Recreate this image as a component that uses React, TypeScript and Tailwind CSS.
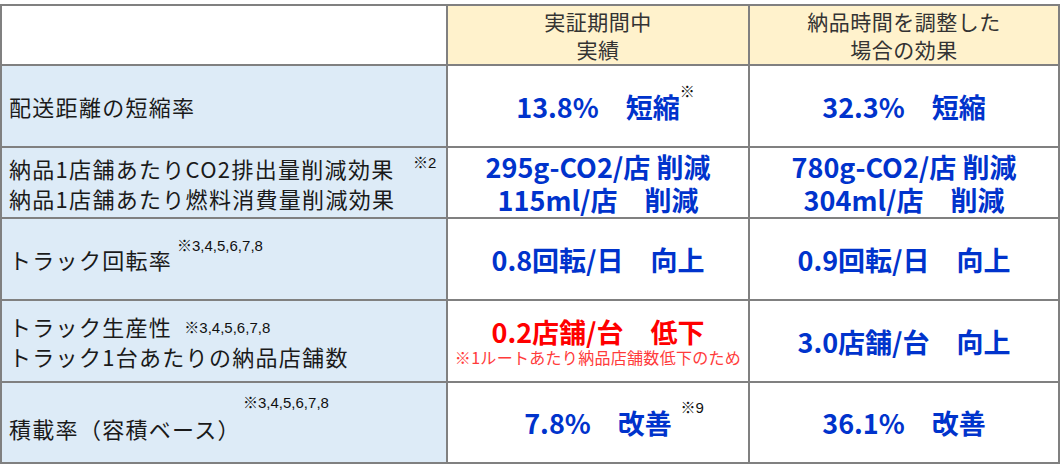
import React from "react";

const F = { fontFamily: '"Noto Sans CJK JP", "Noto Sans", sans-serif' };

function Sup({ children, cls = "" }: { children: React.ReactNode; cls?: string }) {
  return (
    <span
      className={"text-[15px] font-normal text-[#111] tracking-normal leading-none font-['Liberation_Sans','Noto_Sans_CJK_JP',sans-serif] " + cls}
    >
      {children}
    </span>
  );
}

export default function App() {
  const label = "bg-[#ddebf7] border-r-2 border-b-2 border-[#808080] flex flex-col justify-center pl-[7px] text-[22px] leading-[30px] tracking-[1.3px] text-[#1a1a1a]";
  const val = "bg-white border-r-2 border-b-2 border-[#808080] flex flex-col items-center justify-center text-[27px] font-bold leading-[33px] text-[#0033cc]";
  return (
    <div className="w-[1061px] h-[465px] bg-white pt-[4px]" style={F}>
      <div className="grid grid-cols-[446px_302px_310px] grid-rows-[60px_82px_71px_82px_82px_81px] w-[1060px] border-l-2 border-t-2 border-[#808080]">
        {/* header */}
        <div className="bg-white border-r-2 border-b-2 border-[#808080]" />
        <div className="bg-[#fff2cc] border-r-2 border-b-2 border-[#808080] flex flex-col items-center justify-center text-[21px] leading-[28px] text-[#333] tracking-[0.5px]">
          <span>実証期間中</span>
          <span>実績</span>
        </div>
        <div className="bg-[#fff2cc] border-r-2 border-b-2 border-[#808080] flex flex-col items-center justify-center text-[21px] leading-[28px] text-[#333] tracking-[0.5px]">
          <span>納品時間を調整した</span>
          <span>場合の効果</span>
        </div>

        {/* row 1 */}
        <div className={label}>
          <span>配送距離の短縮率</span>
        </div>
        <div className={val}>
          <span className="relative">
            13.8%　短縮
            <Sup cls="absolute -right-[15px] -top-[6px]">※</Sup>
          </span>
        </div>
        <div className={val}>
          <span>32.3%　短縮</span>
        </div>

        {/* row 2 */}
        <div className={label}>
          <span className="relative">
            納品1店舗あたりCO2排出量削減効果
            <Sup cls="absolute left-[404px] top-[2px]">※2</Sup>
          </span>
          <span>納品1店舗あたり燃料消費量削減効果</span>
        </div>
        <div className={val + " leading-[32px]"}>
          <span>295g-CO2/店 削減</span>
          <span>115ml/店　削減</span>
        </div>
        <div className={val + " leading-[32px]"}>
          <span>780g-CO2/店 削減</span>
          <span>304ml/店　削減</span>
        </div>

        {/* row 3 */}
        <div className={label}>
          <span className="relative">
            トラック回転率
            <Sup cls="absolute left-[168px] -top-[6px] whitespace-nowrap">※3,4,5,6,7,8</Sup>
          </span>
        </div>
        <div className={val}>
          <span>0.8回転/日　向上</span>
        </div>
        <div className={val}>
          <span>0.9回転/日　向上</span>
        </div>

        {/* row 4 */}
        <div className={label}>
          <span>
            トラック生産性 <Sup cls="relative -top-[3px] ml-[6px]">※3,4,5,6,7,8</Sup>
          </span>
          <span>トラック1台あたりの納品店舗数</span>
        </div>
        <div className={val + " text-[#ff0000]"}>
          <span className="leading-[30px] mt-[2px]">0.2店舗/台　低下</span>
          <span className="text-[16px] font-normal leading-[20px] text-[#ff3b3b] tracking-[0.3px] whitespace-nowrap">
            ※1ルートあたり納品店舗数低下のため
          </span>
        </div>
        <div className={val}>
          <span>3.0店舗/台　向上</span>
        </div>

        {/* row 5 */}
        <div className={label}>
          <span className="relative mt-[10px]">
            積載率（容積ベース）
            <Sup cls="absolute left-[234px] -top-[18px] whitespace-nowrap">※3,4,5,6,7,8</Sup>
          </span>
        </div>
        <div className={val}>
          <span className="relative">
            7.8%　改善
            <Sup cls="absolute -right-[32px] -top-[6px]">※9</Sup>
          </span>
        </div>
        <div className={val}>
          <span>36.1%　改善</span>
        </div>
      </div>
    </div>
  );
}
